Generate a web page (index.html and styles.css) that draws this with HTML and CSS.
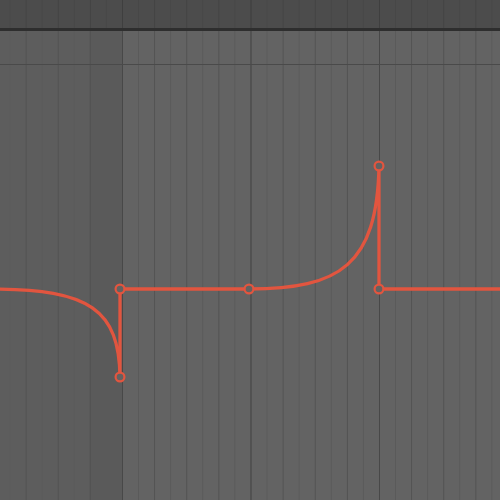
FILE: index.html
```html
<!DOCTYPE html>
<html lang="en">
<head>
  <meta charset="UTF-8">
  <meta name="viewport" content="width=device-width, initial-scale=1">
  <title>Automation Lane</title>
  <link rel="stylesheet" href="styles.css">
</head>
<body>

  <div class="arrangement">
    <div class="ruler"></div>
    <div class="divider"></div>
    <div class="clip-row"></div>
    <div class="lane">
      <svg class="envelope" viewBox="0 65 500 435" width="500" height="435">
        <path class="curve" d="M -8 289 C 90 289 119 310 120 377 L 120 289 L 249 289 C 340 289 377 265 379 166 L 379 289 L 510 289" />
        <circle class="node" cx="120" cy="377" r="4.4" />
        <circle class="node" cx="120" cy="289" r="4.4" />
        <circle class="node" cx="249" cy="289" r="4.4" />
        <circle class="node" cx="379" cy="166" r="4.4" />
        <circle class="node" cx="379" cy="289" r="4.4" />
      </svg>
    </div>
  </div>

</body>
</html>
```

FILE: styles.css
```css
* {
  margin: 0;
  padding: 0;
  box-sizing: border-box;
}
body {
  background: #636363;
  font-family: "Liberation Sans", Arial, sans-serif;
}
.arrangement {
  width: 500px;
  height: 500px;
  display: flex;
  flex-direction: column;
  overflow: hidden;
}

/* grid: bar = 128.5px, beat = 32.125px, first bar line at x=122 */
.ruler {
  height: 28px;
  background-color: #4c4c4c;
  background-image:
    linear-gradient(90deg, #3f3f3f 0 1px, transparent 1px),
    linear-gradient(90deg, #434343 0 1px, transparent 1px),
    linear-gradient(90deg, #474747 0 1px, transparent 1px);
  background-size: 128.5px 100%, 32.125px 100%, 32.125px 100%;
  background-position: 122px 0, 122px 0, 138px 0;
}
.divider {
  height: 3px;
  background: #2e2e2e;
}
.clip-row,
.lane {
  background-image:
    linear-gradient(90deg, #484848 0 1px, transparent 1px),
    linear-gradient(90deg, #525252 0 1px, transparent 1px),
    linear-gradient(90deg, #5a5a5a 0 1px, transparent 1px),
    linear-gradient(90deg, #5d5d5d 0 89px, #5a5a5a 89px 122px, #636363 122px);
  background-size: 128.5px 100%, 32.125px 100%, 32.125px 100%, 100% 100%;
  background-position: 122px 0, 122px 0, 138px 0, 0 0;
  background-repeat: repeat-x, repeat-x, repeat-x, no-repeat;
}
.clip-row {
  height: 34px;
  border-bottom: 1px solid #4a4a4a;
}
.lane {
  flex: 1;
}
.envelope {
  display: block;
}
.curve {
  fill: none;
  stroke: #e2553f;
  stroke-width: 3.3;
  stroke-linejoin: round;
}
.node {
  fill: #626262;
  stroke: #e2553f;
  stroke-width: 2.2;
}
```
